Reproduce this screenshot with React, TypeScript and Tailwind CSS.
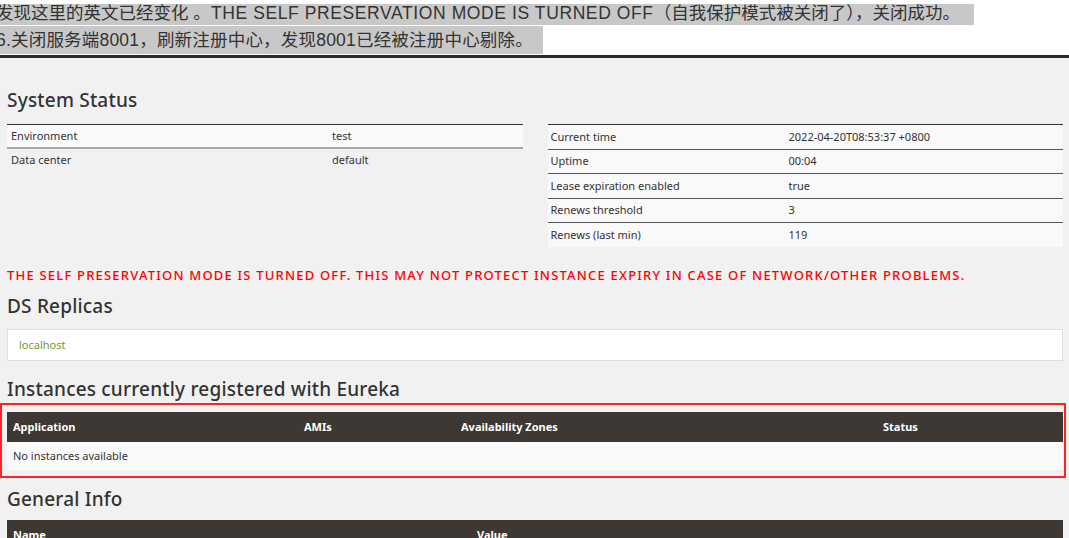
const leftRows = [
  ["Environment", "test"],
  ["Data center", "default"],
];

const rightRows = [
  ["Current time", "2022-04-20T08:53:37 +0800"],
  ["Uptime", "00:04"],
  ["Lease expiration enabled", "true"],
  ["Renews threshold", "3"],
  ["Renews (last min)", "119"],
];

const Heading = ({ children }: { children: React.ReactNode }) => (
  <h2 className="text-[19px] font-medium text-[#333] leading-none tracking-[0.2px]">{children}</h2>
);

export default function App() {
  return (
    <div className="min-h-[538px] bg-[#f1f1f1] text-[#333] font-['Noto_Sans',sans-serif] overflow-hidden">
      {/* blog text above the screenshot */}
      <div className="bg-white text-[17.5px] text-[#333] font-['Liberation_Sans','Noto_Sans_CJK_SC',sans-serif] -ml-[4px] pb-[1px]">
        <div className="h-[25px] overflow-hidden whitespace-nowrap">
          <span className="bg-[#c8c8c8] inline-block h-[25px] leading-[18px] pr-[14px]">
            发现这里的英文已经变化 。<span className="tracking-[0.6px]">THE SELF PRESERVATION MODE IS TURNED OFF</span>（自我保护模式被关闭了），关闭成功。
          </span>
        </div>
        <div className="h-[28px] mt-[1px] whitespace-nowrap">
          <span className="bg-[#c8c8c8] inline-block h-[28px] leading-[28px] pr-[10px] tracking-[0.2px]">
            6.关闭服务端8001，刷新注册中心，发现8001已经被注册中心剔除。
          </span>
        </div>
      </div>
      <div className="h-[3px] bg-[#2a2a2a]" />

      <div className="px-[7px] pr-[6px]">
        <div className="pt-[33px]">
          <Heading>System Status</Heading>
        </div>

        <div className="grid grid-cols-2 gap-[25px] mt-[14px] text-[11px] text-[#333]">
          <div className="border-t border-[#333]">
            {leftRows.map(([k, v], i) => (
              <div
                key={k}
                className={
                  i === 0
                    ? "grid grid-cols-[321px_1fr] h-[24px] items-center bg-[#fafafa] border-b-2 border-[#a8a8a8]"
                    : "grid grid-cols-[321px_1fr] h-[23px] items-center"
                }
              >
                <span className="pl-[4px]">{k}</span>
                <span className="pl-[4px]">{v}</span>
              </div>
            ))}
          </div>
          <div className="border-t border-[#333]">
            {rightRows.map(([k, v], i) => (
              <div
                key={k}
                className={
                  i < rightRows.length - 1
                    ? "grid grid-cols-[237px_1fr] h-[24.5px] items-center bg-[#f9f9f9] border-b border-[#555]"
                    : "grid grid-cols-[237px_1fr] h-[24px] items-center bg-[#f9f9f9]"
                }
              >
                <span className="pl-[3px]">{k}</span>
                <span className="pl-[4px]">{v}</span>
              </div>
            ))}
          </div>
        </div>

        <p className="mt-[22px] text-[13px] leading-none text-[#ff0000] font-medium tracking-[1.2px] whitespace-nowrap">
          THE SELF PRESERVATION MODE IS TURNED OFF. THIS MAY NOT PROTECT INSTANCE EXPIRY IN CASE OF NETWORK/OTHER PROBLEMS.
        </p>

        <div className="mt-[15px]">
          <Heading>DS Replicas</Heading>
        </div>

        <div className="mt-[13px] h-[32px] bg-white border border-[#dedede] flex items-center pl-[11px]">
          <a className="text-[11px] text-[#6e9a37]">localhost</a>
        </div>

        <div className="mt-[19px]">
          <Heading>Instances currently registered with Eureka</Heading>
        </div>

        <div className="mt-[4px] -ml-[7px] -mr-[3px] border-2 border-[#ff2424] pl-[5px] pr-[1px] pt-[7px] pb-[6px]">
          <div className="grid grid-cols-[291px_157px_422px_1fr] h-[30px] items-center bg-[#3d3833] text-white text-[11px] font-bold">
            <span className="pl-[6px]">Application</span>
            <span className="pl-[6px]">AMIs</span>
            <span className="pl-[6px]">Availability Zones</span>
            <span className="pl-[6px]">Status</span>
          </div>
          <div className="h-[28px] flex items-center bg-[#fafafa] text-[11px] pl-[6px]">
            No instances available
          </div>
        </div>

        <div className="mt-[12px]">
          <Heading>General Info</Heading>
        </div>

        <div className="mt-[11px] grid grid-cols-[464px_1fr] h-[30px] items-center bg-[#3d3833] text-white text-[11px] font-bold">
          <span className="pl-[6px]">Name</span>
          <span className="pl-[6px]">Value</span>
        </div>
      </div>
    </div>
  );
}
